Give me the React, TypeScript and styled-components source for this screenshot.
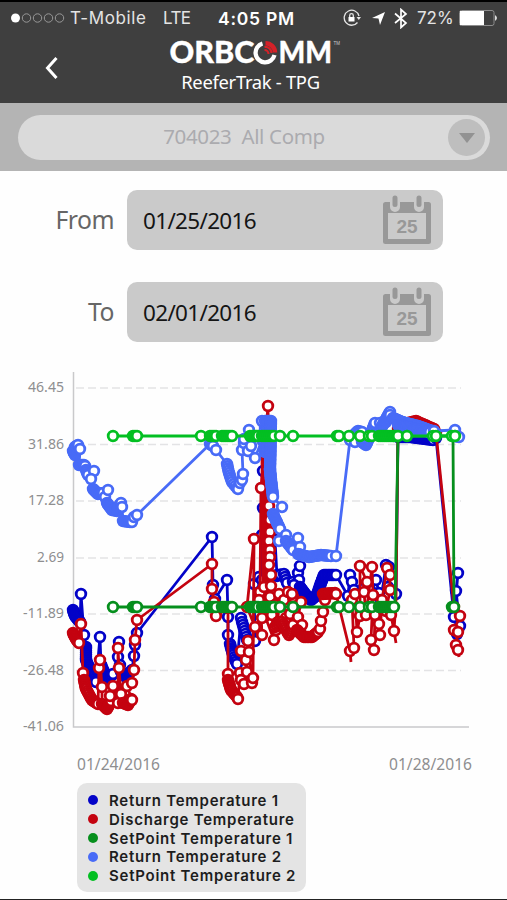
import React from 'react';
import styled, { createGlobalStyle } from 'styled-components';

const humanist = '"Noto Sans", "Open Sans", sans-serif';

const GlobalStyle = createGlobalStyle`
  * { box-sizing: border-box; }
  body { margin: 0; background: #fff; }
`;

const Screen = styled.main`
  display: flex;
  flex-direction: column;
  width: 507px;
  height: 900px;
  overflow: hidden;
  background: #fefefe;
  border-bottom: 1px solid #222;
  font-family: ${humanist};
`;

const Header = styled.header`
  height: 103px;
  flex: none;
  border-top: 2px solid #000;
  background: #3f3f3f;
  color: #fff;
`;

const StatusBar = styled.div`
  display: flex;
  align-items: center;
  height: 32px;
  padding: 0 10px 0 11px;
  font-family: Inter, sans-serif;
  white-space: nowrap;
`;

const StatusText = styled.span<{ $width: number; $gap?: number; $bold?: boolean; $track?: number }>`
  flex: none;
  width: ${p => p.$width}px;
  margin-left: ${p => p.$gap ?? 0}px;
  color: ${p => (p.$bold ? '#fff' : '#e4e4e4')};
  font-size: ${p => (p.$bold ? 17.5 : 17)}px;
  font-weight: ${p => (p.$bold ? 600 : 400)};
  letter-spacing: ${p => p.$track ?? 0}px;
`;

const StatusIcon = styled.svg<{ $gap?: number }>`
  flex: none;
  display: block;
  margin-left: ${p => p.$gap ?? 0}px;
`;

const TitleBar = styled.div`
  display: grid;
  grid-template-columns: 103px 1fr 103px;
  height: 68px;
`;

const BackButton = styled.button`
  border: 0;
  padding: 0;
  background: none;
  display: flex;
  align-items: center;
  justify-content: center;
`;

const Brand = styled.div`
  display: flex;
  flex-direction: column;
  align-items: center;
`;

const Logo = styled.svg`
  display: block;
  width: 180px;
  height: 34px;
  overflow: visible;
`;

const Subtitle = styled.h1`
  margin: 2px 0 0 -6px;
  font-size: 18.4px;
  line-height: 24px;
  font-weight: 400;
  letter-spacing: -0.3px;
`;

const SelectBar = styled.div`
  flex: none;
  height: 68px;
  padding: 12px 17px 0 18px;
  background: #b4b4b4;
`;

const SelectPill = styled.div`
  display: flex;
  align-items: center;
  height: 45px;
  padding: 0 5px 0 0;
  border-radius: 23px;
  background: #dadada;
`;

const SelectValue = styled.span`
  flex: 1;
  padding: 0 0 4px 22px;
  text-align: center;
  white-space: pre;
  color: #ababaf;
  font-size: 20.5px;
  letter-spacing: -0.35px;
`;

const DropButton = styled.span`
  display: flex;
  align-items: center;
  justify-content: center;
  width: 37px;
  height: 37px;
  border-radius: 50%;
  background: #bebebe;
`;

const DateForm = styled.form`
  flex: none;
  display: grid;
  gap: 32px;
  padding: 19px 64px 0 0;
`;

const DateRow = styled.label`
  display: grid;
  grid-template-columns: 114px 316px;
  column-gap: 13px;
  align-items: center;
  height: 60px;
`;

const DateLabel = styled.span`
  padding-bottom: 2px;
  text-align: right;
  color: #666;
  font-size: 24.7px;
  letter-spacing: -0.5px;
`;

const DateField = styled.span`
  display: flex;
  align-items: center;
  justify-content: space-between;
  height: 60px;
  padding: 0 12px 0 16px;
  border-radius: 10px;
  background: #cacaca;
  color: #151515;
  font-size: 22.5px;
  letter-spacing: -0.68px;
`;

const Chart = styled.svg`
  flex: none;
  display: block;
  width: 507px;
  height: 439px;
`;

const Legend = styled.ul`
  flex: none;
  width: 229px;
  height: 109px;
  margin: 2px 0 0 77px;
  padding: 8px 0 0 11px;
  border-radius: 10px;
  background: #e4e4e4;
  list-style: none;
`;

const LegendItem = styled.li<{ $color: string }>`
  display: flex;
  align-items: center;
  gap: 11px;
  height: 18.8px;
  color: #1d1d1d;
  font: 600 15px Inter, sans-serif;
  letter-spacing: 0.75px;
  white-space: nowrap;
  &::before {
    content: '';
    width: 10px;
    height: 10px;
    border-radius: 50%;
    background: ${p => p.$color};
  }
`;

const Calendar = () => (
  <svg width="48" height="50" viewBox="0 0 48 50">
    <rect y="7" width="48" height="42" rx="2.5" fill="#989898" />
    <rect x="5" y="18" width="38" height="26" fill="#cacaca" />
    <g strokeLinecap="round">
      <path d="M12 5v7M36 5v7" stroke="#cacaca" strokeWidth="10" />
      <path d="M12 3v6.500M36 3v6.500" stroke="#989898" strokeWidth="5" />
    </g>
    <text x="24" y="38" textAnchor="middle" fill="#989898" fontFamily="Liberation Sans, sans-serif" fontWeight="700" fontSize="19" letterSpacing="0">25</text>
  </svg>
);

type Pt = [number, number];

/* Evenly spaced samples along a polyline, for stretches of closely logged readings. */
const run = (step: number, ...xy: number[]): Pt[] => {
  const out: Pt[] = [];
  for (let i = 0; i + 3 < xy.length; i += 2) {
    const [x1, y1, x2, y2] = xy.slice(i, i + 4);
    const n = Math.max(1, Math.round(Math.hypot(x2 - x1, y2 - y1) / step));
    for (let k = 0; k < n; k++) out.push([x1 + ((x2 - x1) * k) / n, y1 + ((y2 - y1) * k) / n]);
  }
  out.push([xy[xy.length - 2], xy[xy.length - 1]]);
  return out;
};
const at = (...xy: number[]): Pt[] => {
  const out: Pt[] = [];
  for (let i = 0; i < xy.length; i += 2) out.push([xy[i], xy[i + 1]]);
  return out;
};

const setpointXs = [
  113, 133, 135, 137, 201, 210, 212, 214, 216, 222, 224, 226, 228, 230, 232,
  250, 252, 254, 256, 258, 262, 264, 266, 268, 270, 272, 274, 280, 293, 337, 339, 349, 360, 369, 372,
  379, 381, 383, 385, 387, 389, 391, 393, 394,
];
const flat = (y: number, xs: number[]): Pt[] => xs.map(x => [x, y] as Pt);

interface Series { name: string; color: string; line: Pt[][]; marks: Pt[] }

const ret1a = [
  ...run(1.3, 73, 610, 75, 616, 80, 622), ...at(81, 594, 84, 635),
  ...run(2, 86, 647, 86, 660, 91, 672, 96, 682), ...at(100, 637, 101, 665),
  ...run(2, 101, 665, 107, 679, 113, 674), ...at(118, 657, 119, 642, 120, 665),
  ...run(2, 121, 672, 126, 677, 132, 670), ...at(134, 656, 135, 645, 137, 633, 212, 537, 213, 585, 215, 599, 227, 580, 228, 617, 228, 635),
  ...run(2.4, 230, 644, 233, 655, 237, 664), ...at(241, 618), ...run(3, 242, 622, 247, 640), ...at(255, 641, 254, 584, 259, 577, 262, 580, 263, 471, 263, 508, 262, 535, 275, 540, 277, 576),
  ...run(3, 277, 575, 284, 574, 287, 583), ...at(293, 582, 298, 573, 300, 566, 299, 580, 294, 585),
  ...run(1.5, 300, 587, 306, 595, 311, 600, 317, 595, 321, 583, 324, 575, 334, 575), ...at(336, 575, 348, 596, 350, 575, 352, 582, 354, 590, 363, 589, 370, 590, 376, 580, 379, 593, 381, 600, 386, 565, 389, 567, 388, 587, 396, 594),
];
const ret1b = [...run(1.5, 398, 437, 410, 437, 433, 440), ...at(436, 438, 454, 617, 458, 573, 456, 591, 460, 626, 457, 634)];

const disA = [
  ...run(1.3, 73, 633, 76, 639, 79, 643), ...at(81, 624, 83, 673),
  ...run(2, 84, 680, 86, 689, 92, 700, 98, 704), ...at(99, 668, 100, 660, 102, 687),
  ...run(1.5, 102, 704, 107, 709, 111, 701), ...at(110, 696, 113, 686, 118, 703, 118, 648, 119, 668, 121, 694),
  ...run(1.6, 123, 703, 128, 705, 131, 699), ...at(132, 700, 127, 686, 132, 683, 134, 670, 135, 640, 137, 620, 212, 564, 212, 589, 214, 602, 216, 616, 228, 608, 228, 674),
  ...run(1.8, 228, 680, 231, 690, 237, 697), ...at(238, 699, 240, 673, 241, 680, 244, 684, 247, 672, 246, 660, 241, 651, 249, 652, 248, 641, 252, 683, 253, 678, 254, 539, 247, 607, 255, 627, 262, 635, 260, 592),
  ...at(261, 488, 268, 406, 269, 506, 270, 520, 270, 532, 269, 541, 270, 550, 270, 557, 269, 565, 271, 575, 264, 587, 271, 586, 270, 597, 262, 618, 259, 600, 274, 640, 272, 615, 278, 622, 279, 594, 275, 605, 276, 630, 286, 618, 284, 600, 288, 592, 293, 597, 290, 614),
  ...run(2.2, 275, 627, 282, 622, 289, 635, 293, 625), ...at(292, 594, 301, 602, 298, 617, 302, 625),
  ...run(1.6, 297, 630, 304, 637, 312, 637, 318, 632), ...at(320, 629, 321, 621, 323, 612, 325, 600),
  ...run(1.3, 323, 594, 335, 593), ...at(336, 594, 350, 651, 354, 648, 352, 600, 355, 594, 357, 632, 360, 616, 360, 566, 367, 582, 364, 592, 366, 615, 372, 567, 373, 595, 371, 640, 374, 650, 375, 615, 379, 624, 380, 635, 382, 600, 387, 568, 390, 575, 390, 590, 386, 611, 391, 615, 394, 631),
];
const disB = [...run(2, 398, 429, 404, 424, 416, 421, 434, 429), ...at(436, 433, 454, 607, 460, 616, 454, 630, 458, 632, 456, 645, 458, 650)];

/* Rapid swings drawn without markers. */
const disSwings = at(263, 600, 262, 458, 264, 600, 265, 462, 266, 610, 267, 480, 268, 620, 269, 500, 269, 610);

const ret2 = [
  ...run(1.3, 73, 451, 75, 455, 75, 447, 78, 445), ...at(80, 449), ...run(1.3, 79, 465, 84, 465), ...at(85, 466),
  ...run(1.6, 86, 470, 88, 475), ...at(94, 471, 91, 479), ...run(1.3, 93, 489, 98, 494, 103, 493), ...at(105, 497, 108, 490),
  ...run(1.5, 107, 503, 112, 510, 117, 511, 119, 506, 121, 503), ...at(122, 507), ...run(1.5, 123, 521, 130, 522), ...at(132, 522, 134, 517, 137, 515),
  ...run(1.5, 210, 444, 213, 446), ...at(216, 450), ...run(2.5, 227, 464, 229, 473, 232, 482, 237, 488), ...at(238, 489, 240, 483, 242, 480, 243, 474, 242, 450, 244, 443, 249, 430, 244, 439, 248, 451, 251, 446, 255, 458, 262, 440),
  ...run(1.3, 265, 452, 265, 423), ...at(262, 421), ...run(1.3, 265, 421, 271, 421, 270, 470), ...run(1.3, 270, 470, 271, 480, 273, 497),
  ...at(282, 507), ...run(1.5, 273, 514, 280, 529), ...at(286, 535, 279, 541), ...run(1.8, 286, 541, 293, 550), ...at(298, 538, 300, 547),
  ...run(1.3, 298, 554, 309, 557, 321, 555, 331, 556), ...at(336, 556, 350, 440), ...run(1.5, 353, 436, 358, 431, 362, 432), ...at(355, 442), ...run(1.5, 362, 442, 366, 445, 372, 431, 375, 423), ...at(380, 423, 386, 422),
  ...run(1.3, 380, 430, 390, 412), ...at(390, 415), ...run(1.3, 393, 418, 402, 422, 418, 426, 432, 431, 404, 431, 398, 425, 430, 432), ...at(434, 431, 455, 430), ...run(1.5, 455, 436, 459, 437),
];

const series: Series[] = [
  { name: 'Return Temperature 1', color: '#0303c8', line: [[...ret1a, ...ret1b]], marks: [...ret1a, ...ret1b] },
  {
    name: 'Discharge Temperature', color: '#c40310',
    line: [[...disA, ...at(396, 600), ...disB], disSwings, at(350, 651, 351, 662), at(394, 631, 396, 643), at(458, 650, 459, 657)],
    marks: [...disA, ...disB],
  },
  {
    name: 'SetPoint Temperature 1', color: '#068f1d',
    line: [at(113, 607, 395, 607, 398, 436, 453, 436, 454, 607)],
    marks: [...flat(607, setpointXs), [452, 607], [454, 607]],
  },
  { name: 'Return Temperature 2', color: '#486bf7', line: [ret2], marks: ret2 },
  {
    name: 'SetPoint Temperature 2', color: '#03bf22',
    line: [at(113, 436, 455, 436)],
    marks: flat(436, [...setpointXs, 396, 398, 407, 433, 436, 452, 455]),
  },
];

const ticks: [string, number][] = [['46.45', 388], ['31.86', 444.5], ['17.28', 501], ['2.69', 558], ['-11.89', 614], ['-26.48', 670.5], ['-41.06', 727]];

const TemperatureChart = () => (
  <Chart viewBox="0 342 507 439">
    {ticks.slice(0, 6).map(([label, y]) => (
      <line key={label} x1="76" x2="461" y1={y} y2={y} stroke="#e3e3e5" strokeWidth="1.500" strokeDasharray="8 4" />
    ))}
    <path d="M73.500 372V727H469" fill="none" stroke="#c9c9cb" strokeWidth="1.500" />
    <g fill="#8e8e90" fontFamily={humanist} fontSize="14.500">
      {ticks.map(([label, y]) => (
        <text key={label} x="64" y={y + 4} textAnchor="end" textLength={label.length === 4 ? 27 : label.length === 5 ? 36 : 41} lengthAdjust="spacingAndGlyphs">{label}</text>
      ))}
      <text x="77" y="769.500" fontSize="16.500" textLength="83" lengthAdjust="spacingAndGlyphs">01/24/2016</text>
      <text x="389" y="769.500" fontSize="16.500" textLength="83" lengthAdjust="spacingAndGlyphs">01/28/2016</text>
    </g>
    {series.map(s => (
      <g key={s.name} stroke={s.color} strokeWidth="2.800">
        {s.line.map((l, i) => <polyline key={i} points={l.join(' ')} fill="none" strokeLinejoin="round" />)}
        {s.marks.map(([x, y], i) => <circle key={i} cx={x} cy={y} r="4.800" fill="#fff" />)}
      </g>
    ))}
  </Chart>
);

export default function App() {
  return (
    <Screen>
      <GlobalStyle />
      <Header>
        <StatusBar>
          <StatusIcon width="56" height="12" viewBox="0 0 56 12">
            <circle cx="4.500" cy="6" r="4.500" fill="#fff" />
            {[15.5, 26.5, 37.5, 48.5].map(x => <circle key={x} cx={x} cy="6" r="4.200" fill="none" stroke="#989898" />)}
          </StatusIcon>
          <StatusText $width={92} $gap={3} $track={0.6}>T-Mobile</StatusText>
          <StatusText $width={55} $gap={1} $track={-0.6}>LTE</StatusText>
          <StatusText $width={90} $bold $track={0.75}>4:05 PM</StatusText>
          <StatusIcon $gap={35} width="18" height="18" viewBox="0 0 18 18" fill="none" stroke="#e5e5e5" strokeWidth="1.300">
            <path d="M14.500 13.500A7.500 7.500 0 1 1 16 7" />
            <path d="M13.500 8h4.500l-2.200 3z" fill="#e5e5e5" stroke="none" />
            <rect x="5.500" y="8" width="6" height="4.500" fill="#fff" stroke="none" />
            <path d="M6.700 8V6.500a1.800 1.800 0 0 1 3.600 0V8" />
          </StatusIcon>
          <StatusIcon $gap={10} width="15" height="15" viewBox="0 0 15 15"><path d="M14 1 9 14 7.500 7.500 1 7z" fill="#fff" /></StatusIcon>
          <StatusIcon $gap={8} width="14" height="21" viewBox="0 0 14 21"><path d="M1 5.500 12 15 7 19.500V1.500L12 6 1 15" fill="none" stroke="#fff" strokeWidth="1.700" /></StatusIcon>
          <StatusText $width={39} $gap={9} $track={0}>72%</StatusText>
          <StatusIcon $gap={3} width="39" height="16" viewBox="0 0 39 16">
            <rect x=".5" y=".5" width="34.500" height="15" rx="2" fill="none" stroke="#8d8d8d" />
            <path d="M1 1h24v14H1z" fill="#fff" />
            <path d="M36 5q4 3 0 6z" fill="#ddd" />
          </StatusIcon>
        </StatusBar>
        <TitleBar>
          <BackButton aria-label="Back" type="button">
            <svg width="16" height="24" viewBox="0 0 16 24"><path d="M12.500 2 3.500 12l9 10" fill="none" stroke="#fff" strokeWidth="3" /></svg>
          </BackButton>
          <Brand>
            <Logo viewBox="163.500 34 180 34">
              <g fill="#fff" stroke="#fff" strokeWidth=".3" fontFamily="Lato, sans-serif" fontWeight="900" fontSize="29.500">
                <text x="169" y="62.800" textLength="85" lengthAdjust="spacingAndGlyphs">ORBC</text>
                <text x="278" y="62.800" textLength="53.500" lengthAdjust="spacingAndGlyphs">MM</text>
              </g>
              <path d="M262 43.500A9.600 9.600 0 1 0 274 55" fill="none" stroke="#fff" strokeWidth="4.300" />
              <path d="M265 43.200A9.500 9.500 0 0 1 274.500 52.500" fill="none" stroke="#d52128" strokeWidth="4.500" />
              <path d="M264 47A6 6 0 0 1 271 53M264 50A4 4 0 0 1 268 54" fill="none" stroke="#d52128" strokeWidth="2.200" />
              <text x="333" y="45" fill="#ccc" fontFamily="Liberation Sans, sans-serif" fontSize="4.500">TM</text>
            </Logo>
            <Subtitle>ReeferTrak - TPG</Subtitle>
          </Brand>
        </TitleBar>
      </Header>
      <SelectBar>
        <SelectPill>
          <SelectValue>704023  All Comp</SelectValue>
          <DropButton><svg width="16" height="10" viewBox="0 0 16 10"><path d="M0 0h16L8 10z" fill="#929292" /></svg></DropButton>
        </SelectPill>
      </SelectBar>
      <DateForm>
        {[['From', '01/25/2016'], ['To', '02/01/2016']].map(([label, date]) => (
          <DateRow key={label}>
            <DateLabel>{label}</DateLabel>
            <DateField>{date}<Calendar /></DateField>
          </DateRow>
        ))}
      </DateForm>
      <TemperatureChart />
      <Legend>
        {series.map(s => <LegendItem key={s.name} $color={s.color}>{s.name}</LegendItem>)}
      </Legend>
    </Screen>
  );
}
